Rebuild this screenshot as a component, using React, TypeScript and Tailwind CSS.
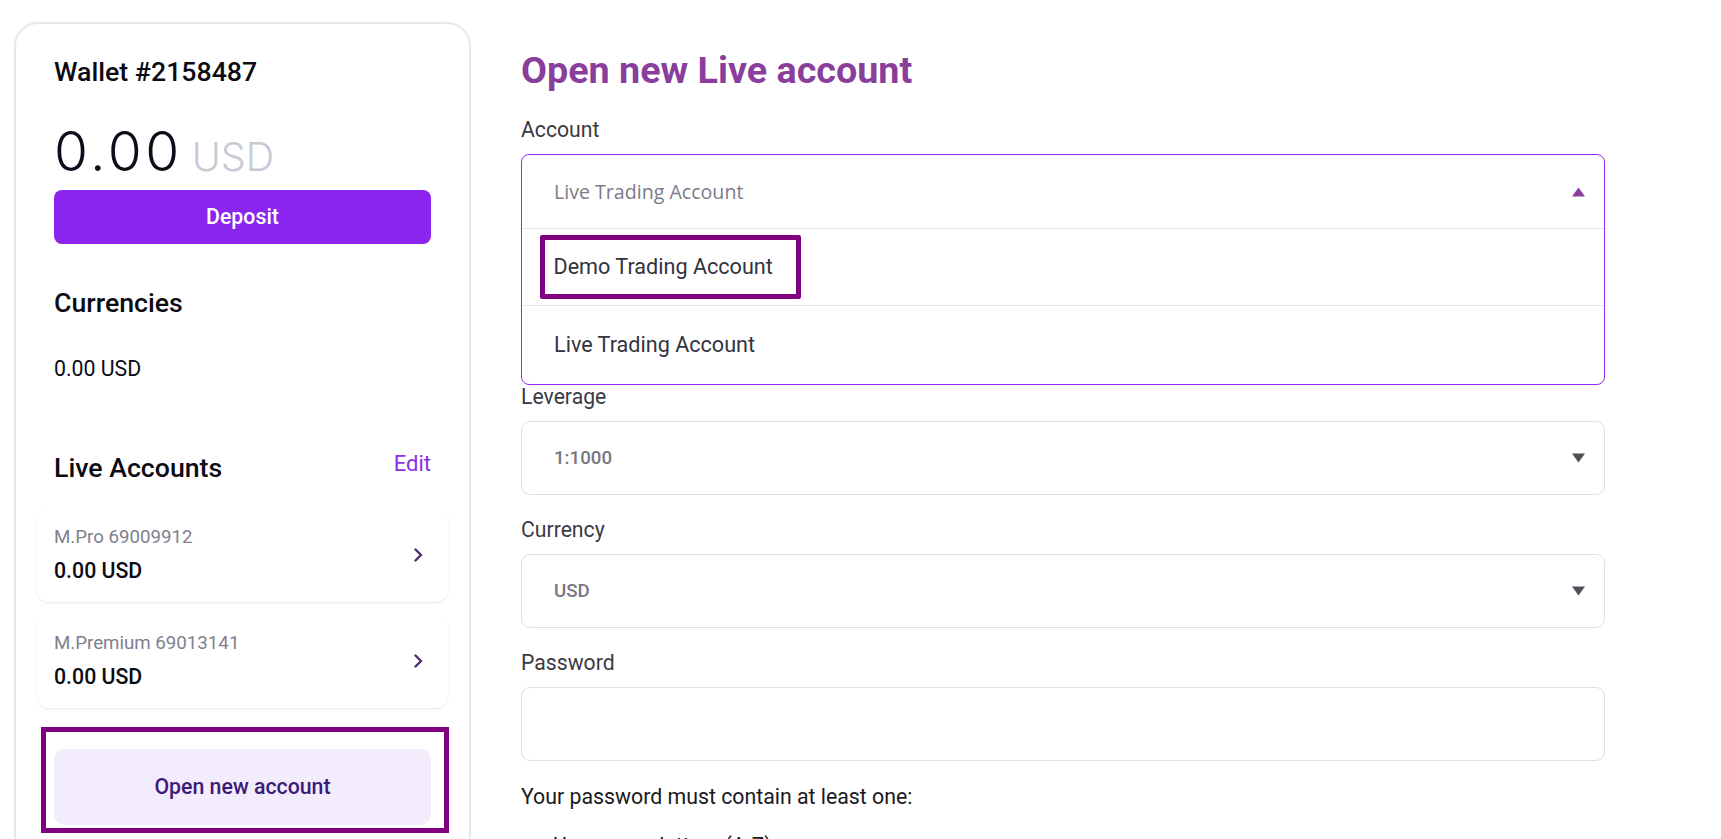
import React from 'react';

function Chevron() {
  return (
    <svg width="9" height="14" viewBox="0 0 9 14" className="mr-[8px] shrink-0">
      <path d="M1.5 1.5 7 7l-5.5 5.5" fill="none" stroke="#4b2d73" strokeWidth="2.4" strokeLinecap="round" strokeLinejoin="round" />
    </svg>
  );
}

function Caret({ up, color }: { up?: boolean; color: string }) {
  return (
    <svg width="13" height="10" viewBox="0 0 13 10" className="shrink-0">
      <polygon points={up ? '6.5,0.5 13,9.5 0,9.5' : '0,0.5 13,0.5 6.5,9.5'} fill={color} />
    </svg>
  );
}

const accounts = [
  { name: 'M.Pro 69009912', balance: '0.00 USD' },
  { name: 'M.Premium 69013141', balance: '0.00 USD' },
];

function WalletCard() {
  return (
    <aside className="w-[457px] shrink-0 rounded-[24px] border-2 border-[#e7e7ee] px-[38px] pt-[32px] pb-[60px]">
      <h2 className="text-[26.7px] leading-[32px] font-medium text-[#0b0b14]">Wallet #2158487</h2>

      <div className="mt-[36px] flex h-[54px] items-baseline gap-[9px] font-['Inter',sans-serif] font-light leading-none">
        <span className="text-[55px] tracking-[3.5px] text-[#0d0d1a]">0.00</span>
        <span className="text-[39.5px] text-[#c9c9d6]">USD</span>
      </div>

      <button className="mt-[12px] h-[54px] w-full rounded-[8px] bg-[#8c24f0] text-[21.3px] font-medium text-white">
        Deposit
      </button>

      <h2 className="mt-[43px] text-[26.7px] leading-[32px] font-medium text-[#0b0b14]">Currencies</h2>
      <div className="mt-[35px] text-[21.3px] leading-[30px] text-[#0b0b14]">0.00 USD</div>

      <div className="mt-[65px] flex items-center justify-between">
        <h2 className="text-[26.7px] leading-[32px] font-medium text-[#0b0b14]">Live Accounts</h2>
        <span className="pb-[8px] text-[22px] leading-[30px] text-[#8c2fe6]">Edit</span>
      </div>

      <div className="mt-[21px] flex flex-col gap-[12px]">
        {accounts.map((a) => (
          <div
            key={a.name}
            className="-mx-[17px] flex items-center justify-between rounded-[12px] px-[17px] py-[16px] shadow-[0_1px_2px_rgba(30,30,60,0.10)]"
          >
            <div>
              <div className="text-[18.7px] leading-[26px] text-[#80808e]">{a.name}</div>
              <div className="mt-[6px] text-[21.3px] leading-[30px] font-medium text-[#0b0b14]">{a.balance}</div>
            </div>
            <Chevron />
          </div>
        ))}
      </div>

      <div className="mt-[19px] -ml-[13px] -mr-[18px] border-[5px] border-[#800080] pt-[17px] pb-[3px] pl-[8px] pr-[13px]">
        <button className="h-[76px] w-full rounded-[10px] bg-[#f3ecfd] text-[21.3px] font-medium text-[#3d1a78]">
          Open new account
        </button>
      </div>
    </aside>
  );
}

function FieldLabel({ children, className = '' }: { children: React.ReactNode; className?: string }) {
  return <label className={'block text-[21.2px] leading-[30px] text-[#3a3a44] ' + className}>{children}</label>;
}

function ClosedSelect({ value }: { value: string }) {
  return (
    <div className="mt-[9px] flex h-[74px] items-center justify-between rounded-[9px] border-[1.5px] border-[#dedee8] pl-[32px] pr-[19.5px]">
      <span className="text-[18.7px] font-medium text-[#767684]">{value}</span>
      <Caret color="#4f4f57" />
    </div>
  );
}

function NewAccountForm() {
  return (
    <main className="ml-[50px] w-[1084px] shrink-0 pt-[26px]">
      <h1 className="text-[37.7px] leading-[44px] font-bold text-[#8a3e9c]">Open new Live account</h1>

      <FieldLabel className="mt-[23px]">Account</FieldLabel>
      <div className="mt-[9px] rounded-[8px] border-[1.5px] border-[#8f2cf0] bg-white">
        <div className="flex h-[74px] items-center justify-between border-b border-[#e6e6ea] pl-[32px] pr-[19.5px]">
          <span className="font-['Open_Sans',sans-serif] text-[19.6px] text-[#7b7b8a]">Live Trading Account</span>
          <Caret up color="#8a3e9c" />
        </div>
        <div className="flex h-[77px] items-center border-b border-[#e6e6ea] pl-[17.5px]">
          <div className="flex h-[64px] w-[261px] items-center rounded-[2px] border-[5px] border-[#800080] pl-[9px] text-[21.6px] text-[#33333f]">
            Demo Trading Account
          </div>
        </div>
        <div className="flex h-[78px] items-center pl-[32px] text-[21.6px] text-[#33333f]">Live Trading Account</div>
      </div>

      <FieldLabel className="-mt-[3px]">Leverage</FieldLabel>
      <ClosedSelect value="1:1000" />

      <FieldLabel className="mt-[20px]">Currency</FieldLabel>
      <ClosedSelect value="USD" />

      <FieldLabel className="mt-[20px]">Password</FieldLabel>
      <input
        type="password"
        className="mt-[9px] block h-[74px] w-full rounded-[9px] border-[1.5px] border-[#dedee8] px-[32px] outline-none"
      />

      <p className="mt-[21px] text-[21.3px] leading-[30px] text-[#1a1a22]">Your password must contain at least one:</p>
      <ul className="mt-[19px] list-disc pl-[32px] text-[21.3px] leading-[30px] text-[#1a1a22]">
        <li>Uppercase letters (A-Z)</li>
        <li>Lowercase letters (a-z)</li>
        <li>Number (0-9)</li>
      </ul>
    </main>
  );
}

export default function App() {
  return (
    <div className="h-[839px] overflow-hidden bg-white font-['Roboto',sans-serif]">
      <div className="flex items-start pl-[14px] pt-[22px]">
        <WalletCard />
        <NewAccountForm />
      </div>
    </div>
  );
}
